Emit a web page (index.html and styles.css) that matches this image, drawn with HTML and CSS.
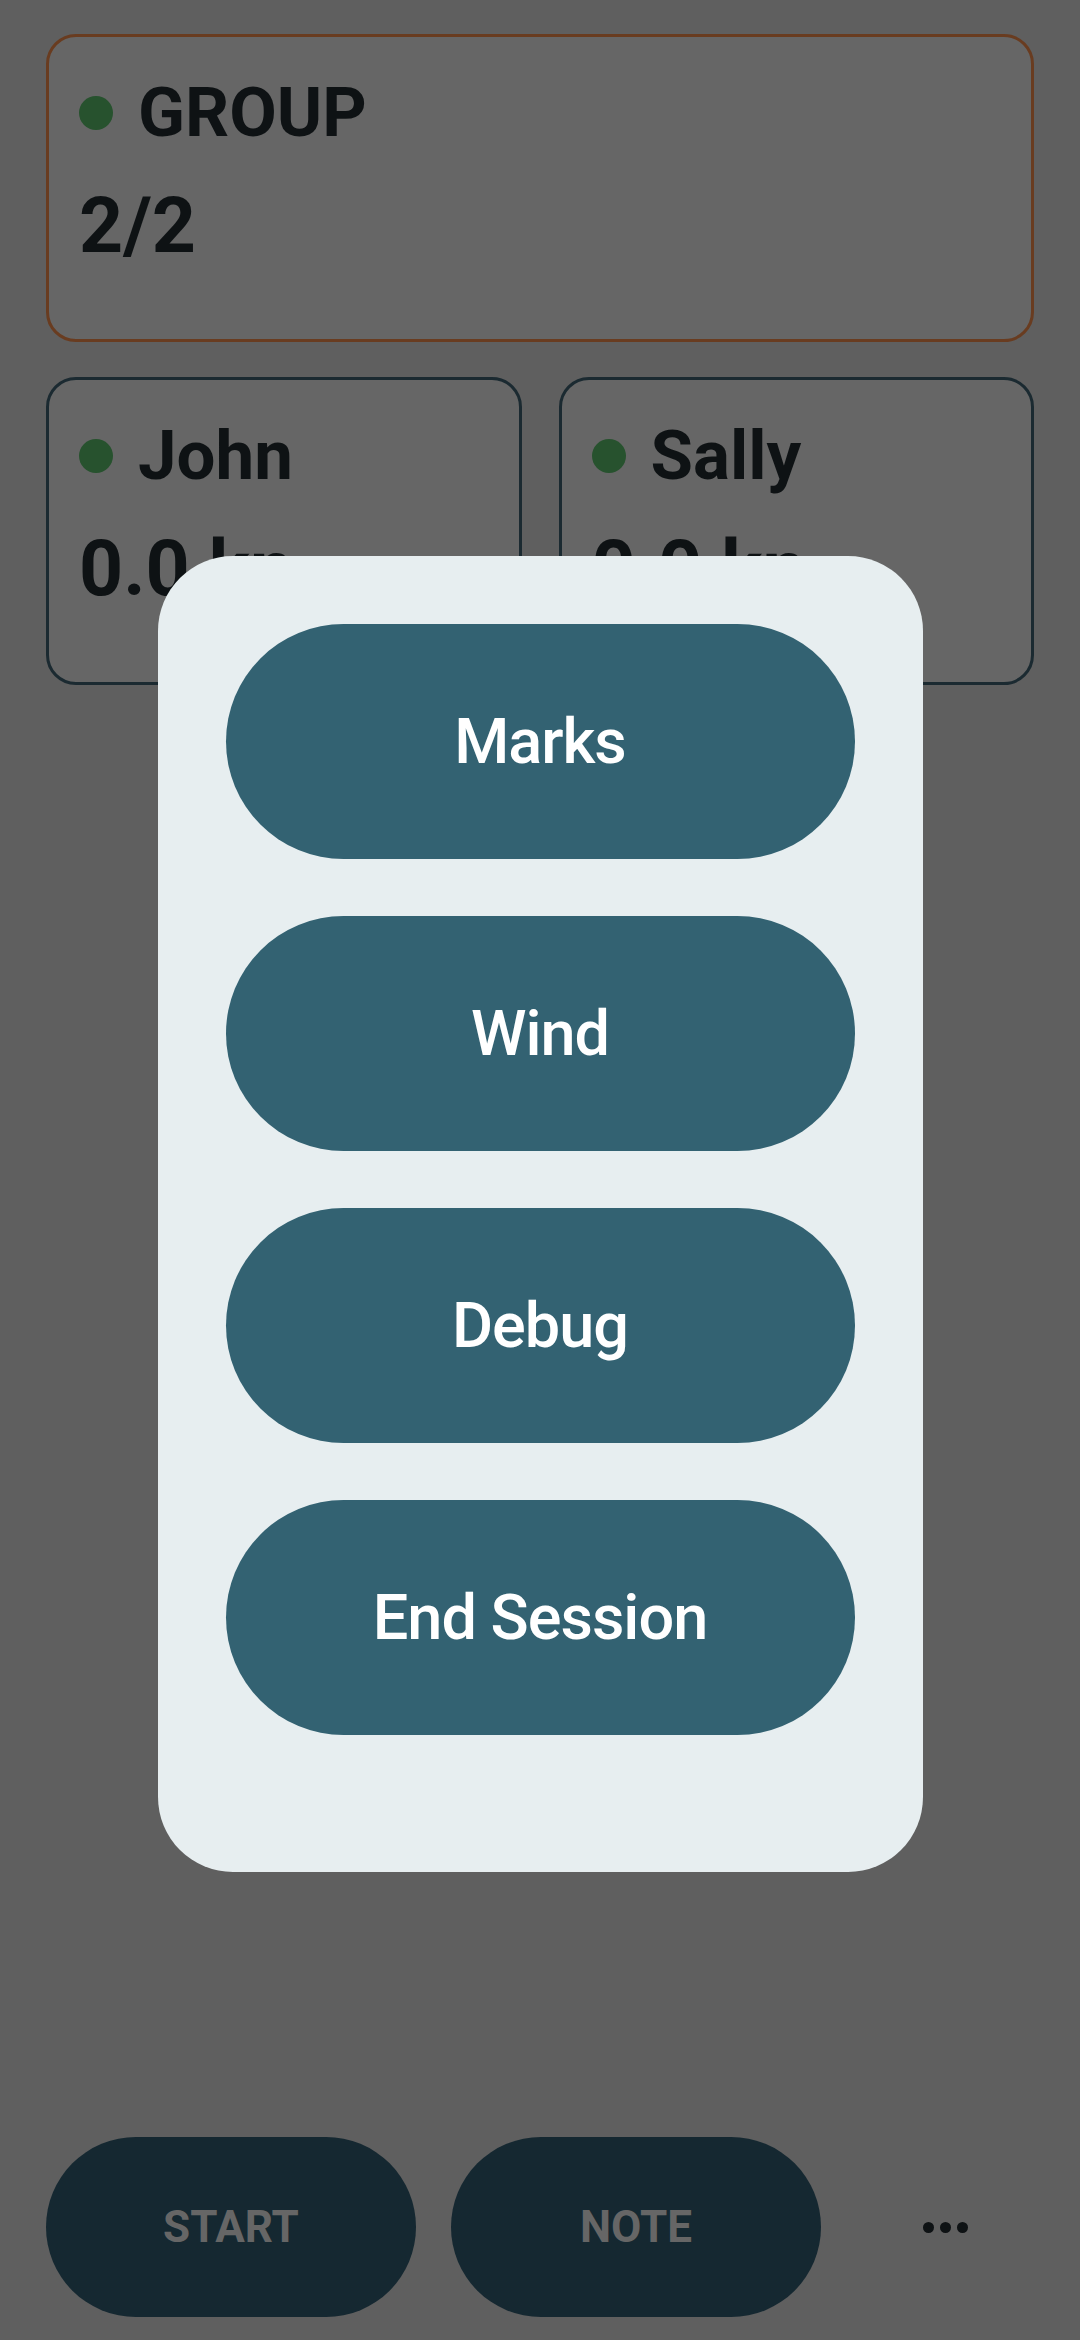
FILE: index.html
```html
<!DOCTYPE html>
<html lang="en">
<head>
    <meta charset="UTF-8">
    <meta name="viewport" content="width=device-width, initial-scale=1.0">
    <title>Session</title>
    <link rel="stylesheet" href="styles.css">
</head>
<body>

<div class="screen">
    <!-- Group summary -->
    <div class="card card-group">
        <div class="card-title">
            <span class="status-dot"></span>
            <span class="title-text">GROUP</span>
        </div>
        <div class="card-value">2/2</div>
    </div>

    <!-- Boats -->
    <div class="boat-grid">
        <div class="card card-boat">
            <div class="card-title">
                <span class="status-dot"></span>
                <span class="title-text">John</span>
            </div>
            <div class="card-value">0.0 kn</div>
        </div>
        <div class="card card-boat">
            <div class="card-title">
                <span class="status-dot"></span>
                <span class="title-text">Sally</span>
            </div>
            <div class="card-value">0.0 kn</div>
        </div>
    </div>

    <!-- Bottom actions -->
    <div class="bottom-bar">
        <button class="bar-button">START</button>
        <button class="bar-button">NOTE</button>
        <div class="more">
            <span></span><span></span><span></span>
        </div>
    </div>
</div>

<!-- Menu dialog -->
<div class="overlay">
    <div class="menu">
        <button class="menu-button">Marks</button>
        <button class="menu-button">Wind</button>
        <button class="menu-button">Debug</button>
        <button class="menu-button">End Session</button>
    </div>
</div>

</body>
</html>
```

FILE: styles.css
```css
body {
    margin: 0;
    padding: 0;
    font-family: Roboto, 'Noto Sans', sans-serif;
    background-color: #5f5f5f;
    color: #0e1214;
}

.screen {
    min-height: 100vh;
    box-sizing: border-box;
    padding: 34px 46px 23px;
    display: flex;
    flex-direction: column;
}

/* Cards */
.card {
    box-sizing: border-box;
    height: 308px;
    padding: 36px 30px 0;
    border: 3px solid #1b2a31;
    border-radius: 30px;
    background-color: #666666;
}

.card-group {
    border-color: #693c20;
}

.boat-grid {
    display: grid;
    grid-template-columns: 1fr 1fr;
    gap: 37px;
    margin-top: 35px;
}

.card-title {
    display: flex;
    align-items: center;
    gap: 25px;
    height: 80px;
}

.status-dot {
    width: 34px;
    height: 34px;
    border-radius: 50%;
    background-color: #27522e;
    flex-shrink: 0;
}

.title-text {
    font-size: 69px;
    font-weight: 700;
    line-height: 80px;
}

.card-value {
    margin-top: 29px;
    font-size: 77px;
    font-weight: 700;
    line-height: 88px;
}

/* Bottom bar */
.bottom-bar {
    margin-top: auto;
    display: flex;
    align-items: center;
    gap: 35px;
}

.bar-button {
    width: 370px;
    height: 180px;
    border: none;
    border-radius: 90px;
    background-color: #152831;
    color: #666666;
    font-family: Roboto, sans-serif;
    font-size: 44px;
    font-weight: 700;
    padding: 0;
}

.more {
    flex: 1;
    display: flex;
    justify-content: center;
    gap: 6px;
}

.more span {
    width: 11px;
    height: 11px;
    border-radius: 50%;
    background-color: #0e1214;
}

/* Menu dialog */
.overlay {
    position: fixed;
    top: 0;
    left: 0;
    right: 0;
    bottom: 0;
    display: flex;
    justify-content: center;
    align-items: flex-start;
    padding-top: 556px;
}

.menu {
    width: 765px;
    box-sizing: border-box;
    padding: 68px 68px 137px;
    border-radius: 75px;
    background-color: #e7eef0;
    display: flex;
    flex-direction: column;
    gap: 57px;
}

.menu-button {
    height: 235px;
    border: none;
    border-radius: 118px;
    background-color: #336272;
    color: #ffffff;
    font-family: Roboto, sans-serif;
    font-size: 63px;
    font-weight: 500;
    letter-spacing: -1px;
    padding: 0;
}
```
